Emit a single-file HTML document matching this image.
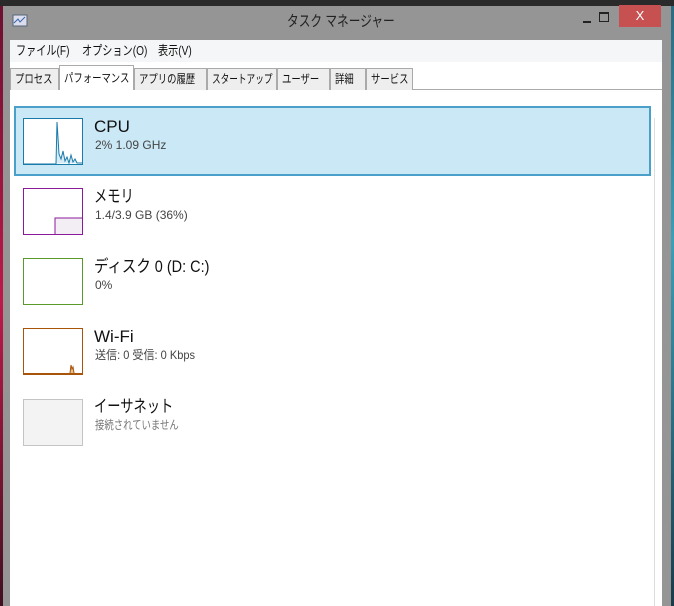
<!DOCTYPE html>
<html><head><meta charset="utf-8"><style>
body{margin:0;width:674px;height:606px;overflow:hidden;background:#1f4a5a;position:relative;font-family:"Liberation Sans","Noto Sans CJK JP",sans-serif}
.a{position:absolute;white-space:nowrap}
.g{box-sizing:border-box;background:#fff;width:60px;height:47px;left:23px}
.t1{font-size:17px;line-height:20px;color:#111;left:94px}
.t2{font-size:12px;line-height:15px;color:#444;left:95px}
.c{display:inline-block;transform:scaleX(.78);transform-origin:left center}
.tab{position:absolute;top:68px;height:22px;border:1px solid #aaa;border-bottom:none;background:#eee;font-size:12px;line-height:21px;box-sizing:border-box;color:#111;white-space:nowrap;overflow:hidden;padding-left:4px}
</style></head><body>
<div class="a" style="left:0;top:0;width:4px;height:606px;background:linear-gradient(#6a1030,#c0184a 50%,#401020)"></div>
<div class="a" style="left:670px;top:0;width:4px;height:606px;background:linear-gradient(#2a6a80,#3aa0b8 40%,#1a3a4a)"></div>
<div class="a" style="left:0;top:0;width:674px;height:6px;background:#2a2a2a"></div>
<div class="a" style="left:3px;top:6px;width:668px;height:600px;background:#959595"></div>
<svg class="a" style="left:12px;top:14px" width="16" height="14"><rect x="1" y="1" width="14" height="11" fill="#dde" stroke="#567"/><path d="M2 9 L6 5 L8 8 L13 3" stroke="#36a" fill="none"/></svg>
<div class="a" style="left:287px;top:12px;font-size:15px;line-height:20px;color:#222"><span class="c">タスク マネージャー</span></div>
<div class="a" style="left:583px;top:21px;width:8px;height:2px;background:#222"></div>
<div class="a" style="left:599px;top:12px;width:8px;height:7px;border:1px solid #222;border-top-width:2px"></div>
<div class="a" style="left:619px;top:5px;width:42px;height:22px;background:#c75050;color:#fff;font-size:13px;text-align:center;line-height:22px">X</div>
<div class="a" style="left:10px;top:40px;width:652px;height:566px;background:#fff"></div>
<div class="a" style="left:10px;top:40px;width:652px;height:22px;background:#f5f6f7;font-size:13px;line-height:22px;color:#111">
<span class="c" style="position:absolute;left:6px">ファイル(F)</span><span class="c" style="position:absolute;left:72px">オプション(O)</span><span class="c" style="position:absolute;left:148px">表示(V)</span></div>
<div class="a" style="left:10px;top:89px;width:652px;height:1px;background:#aaa"></div>
<div class="tab" style="left:10px;width:49px"><span class="c">プロセス</span></div>
<div class="tab" style="left:59px;top:65px;height:25px;width:75px;background:#fff;line-height:24px"><span class="c">パフォーマンス</span></div>
<div class="tab" style="left:134px;width:73px"><span class="c">アプリの履歴</span></div>
<div class="tab" style="left:207px;width:70px"><span class="c" style="transform:scaleX(.72)">スタートアップ</span></div>
<div class="tab" style="left:277px;width:53px"><span class="c">ユーザー</span></div>
<div class="tab" style="left:330px;width:36px"><span class="c">詳細</span></div>
<div class="tab" style="left:366px;width:47px"><span class="c">サービス</span></div>
<div class="a" style="left:654px;top:118px;width:1px;height:488px;background:#ddd"></div>
<div class="a" style="left:14px;top:106px;width:637px;height:70px;box-sizing:border-box;background:#cbe8f6;border:2px solid #4aa0c8"></div>
<svg class="a g" style="top:118px;border:1px solid #1a7aaa" width="60" height="47"><path d="M0 45 L32 45 L33 3 L35 35 L37 40 L39 32 L41 42 L43 38 L45 44 L47 36 L49 43 L51 40 L53 44 L58 44" stroke="#1a7aaa" fill="#d8ecf6"/></svg>
<div class="a t1" style="top:117px">CPU</div><div class="a t2" style="top:138px">2% 1.09 GHz</div>
<svg class="a g" style="top:188px;border:1px solid #8b1a9b" width="60" height="47"><rect x="31" y="29" width="28" height="17" fill="#f3eef3" stroke="#8b1a9b"/></svg>
<div class="a t1" style="top:187px"><span class="c">メモリ</span></div><div class="a t2" style="top:208px">1.4/3.9 GB (36%)</div>
<div class="a g" style="top:258px;border:1px solid #5a9a2a"></div>
<div class="a t1" style="top:257px"><span class="c" style="transform:scaleX(.85)">ディスク 0 (D: C:)</span></div><div class="a t2" style="top:278px">0%</div>
<svg class="a g" style="top:328px;border:1px solid #a8540a;border-bottom-width:2px" width="60" height="47"><path d="M46 44 L47 36 L48 40 L49 38 L50 44" stroke="#a8540a" fill="#e8c090"/></svg>
<div class="a t1" style="top:327px">Wi-Fi</div><div class="a t2" style="top:348px"><span class="c" style="transform:scaleX(.92)">送信: 0 受信: 0 Kbps</span></div>
<div class="a g" style="top:399px;border:1px solid #c4c4c4;background:#f4f3f3"></div>
<div class="a t1" style="top:397px"><span class="c">イーサネット</span></div><div class="a t2" style="top:418px;color:#777"><span class="c">接続されていません</span></div>
</body></html>
